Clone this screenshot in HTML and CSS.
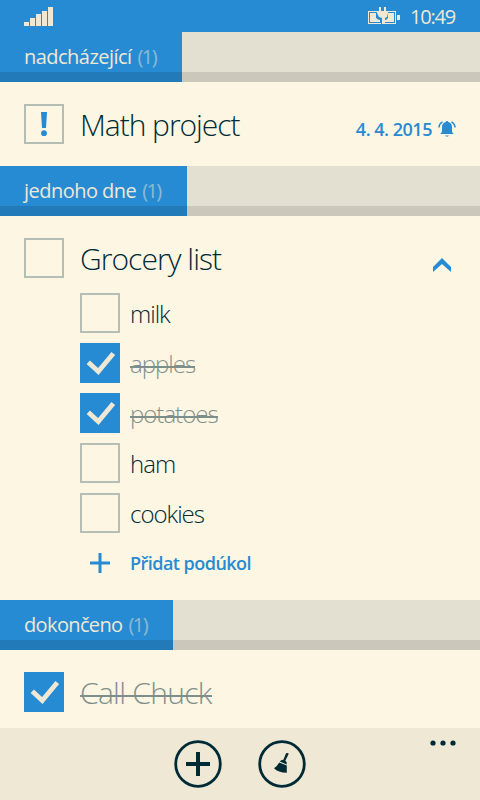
FILE: index.html
```html
<!DOCTYPE html>
<html lang="cs">
<head>
<meta charset="utf-8">
<title>Úkoly</title>
<link rel="stylesheet" href="styles.css">
</head>
<body>
<svg class="defs" width="0" height="0">
  <symbol id="check" viewBox="0 0 40 40"><path d="M8.300 19.200 18.300 28.500 33.300 10.500" fill="none" stroke="#eee8d5" stroke-width="4.800"/></symbol>
</svg>
<div class="phone">
  <header class="status">
    <svg width="30" height="20" viewBox="0 0 30 20" fill="#eee8d5"><path d="M0 16h5v4H0zM6 12h5v8H6zM12 8h5v12h-5zM18 5h5v15h-5zM24 1h5v19h-5z"/></svg>
    <div class="status-right">
      <svg width="32" height="17" viewBox="0 0 32 17" fill="#eee8d5"><path d="M0 4h9v1H1v11h12v1H0zM19 4h9v13H16v-1h11V5h-8z"/><path d="M2 6h6v5l3 2h1v2H2zM20 6h6v9h-9v-2h1l2-2z"/><path d="M11 0h2v4h3V0h2v4h2v2l-1 4-2 1v6h-3v-6l-3-1-2-4V4h2z"/><path d="M29 8h3v5h-3z"/></svg>
      <span class="clock">10:49</span>
    </div>
  </header>
  <main>
    <div class="section s1"><h2><span class="name">nadcházející</span><span class="count">(1)</span></h2></div>
    <div class="task t1">
      <span class="box important"><svg width="36" height="36" viewBox="0 0 36 36" fill="#268bd2"><path d="M15 6h6l-1 16h-4z"/><circle cx="18" cy="27.200" r="2.900"/></svg></span>
      <span class="title math">Math project</span>
      <span class="date">4. 4. 2015</span>
      <svg class="bell" width="18" height="18" viewBox="0 0 18 18"><path d="M9 1c.8 0 1.200.5 1.300 1.100C13 2.700 14 5 14 7v4c0 1.500 1 2.400 2 3H2c1-.6 2-1.500 2-3V7c0-2 1-4.300 3.700-4.900C7.800 1.500 8.200 1 9 1zM7.200 15.500h3.600C10.500 17 7.500 17 7.200 15.500z" fill="#268bd2"/><path d="M4.500 2Q1.200 3.500 1 7.500M13.500 2Q16.800 3.500 17 7.500" fill="none" stroke="#268bd2" stroke-width="1.500"/></svg>
    </div>
    <div class="section s2"><h2><span class="name">jednoho dne</span><span class="count">(1)</span></h2></div>
    <div class="task t2">
      <span class="box"></span>
      <span class="title grocery">Grocery list</span>
      <svg class="chevron" width="18" height="14" viewBox="0 0 18 14"><path d="M0 9 9 0l9 9v5L9 6 0 14z" fill="#268bd2"/></svg>
    </div>
    <ul class="subtasks">
      <li><span class="box"></span><span class="item milk">milk</span></li>
      <li><span class="box on"><svg width="40" height="40"><use href="#check"/></svg></span><span class="item done apples">apples</span></li>
      <li><span class="box on"><svg width="40" height="40"><use href="#check"/></svg></span><span class="item done potatoes">potatoes</span></li>
      <li><span class="box"></span><span class="item ham">ham</span></li>
      <li><span class="box"></span><span class="item cookies">cookies</span></li>
      <li class="add"><svg width="40" height="40" viewBox="0 0 40 40"><path d="M10 20h20M20 10v20" stroke="#268bd2" stroke-width="3" fill="none"/></svg><span class="add-label">Přidat podúkol</span></li>
    </ul>
    <div class="section s3"><h2><span class="name">dokončeno</span><span class="count">(1)</span></h2></div>
    <div class="task t3">
      <span class="box on"><svg width="40" height="40"><use href="#check"/></svg></span>
      <span class="title done chuck">Call Chuck</span>
    </div>
  </main>
  <footer class="appbar">
    <svg width="48" height="48" viewBox="0 0 48 48" fill="none" stroke="#002b36"><circle cx="24" cy="24" r="22.300" stroke-width="2.800"/><path d="M12 24h24M24 12v24" stroke-width="4"/></svg>
    <svg width="48" height="48" viewBox="0 0 48 48"><circle cx="24" cy="24" r="22.300" fill="none" stroke="#002b36" stroke-width="2.800"/><path d="M28 13.300 30.500 13 30.300 14.800 27.400 20.500 28.800 22.800 28.600 24.500 21.800 21.400Q23.500 19.500 25.400 19.800zM21.200 22.600 28.800 25.500V32.800Q20 32.500 16 28.200Q19.500 26 21.200 22.600z" fill="#002b36"/></svg>
    <svg class="more" width="26" height="6" viewBox="0 0 26 6" fill="#002b36"><circle cx="3" cy="3" r="2.600"/><circle cx="13" cy="3" r="2.600"/><circle cx="23" cy="3" r="2.600"/></svg>
  </footer>
</div>
</body>
</html>
```
FILE: styles.css
```css
* { box-sizing: border-box; }
body { margin: 0; background: #fdf6e3; color: #002b36; font-family: "Open Sans", "Noto Sans", sans-serif; }
svg { display: block; flex: none; }
.defs { position: absolute; }
.phone { width: 480px; height: 800px; display: flex; flex-direction: column; overflow: hidden; }
.status { height: 32px; flex: none; background: #268bd2; display: flex; justify-content: space-between; align-items: flex-start; padding: 6px 24px 0; color: #eee8d5; }
.status-right { display: flex; gap: 10px; }
.status-right svg { margin-top: 1px; }
.clock { font-size: 20px; line-height: 21px; font-weight: 400; letter-spacing: -1.2px; width: 46px; white-space: nowrap; }
main { flex: 1; }
.section { height: 50px; background: linear-gradient(#e3e0d2 40px, #cbc8bb 40px); }
h2 { margin: 0; height: 50px; padding-left: 24px; background: linear-gradient(#268bd2 40px, #227ab8 40px); color: #eee8d5; font-size: 20px; line-height: 49px; font-weight: 400; display: flex; gap: 6px; white-space: nowrap; }
.s1 h2 { width: 182px; }
.s2 h2 { width: 187px; }
.s3 h2 { width: 173px; }
.name { letter-spacing: -0.53px; }
.s3 .name { letter-spacing: -0.63px; }
.count { opacity: .5; letter-spacing: -1.6px; }
.task { display: flex; padding: 22px 24px 0; }
.t1 { height: 84px; }
.t2 { height: 77px; }
.t3 { height: 78px; }
.box { width: 40px; height: 40px; flex: none; border: 2px solid #b5beb4; }
.on { border: 0; background: #268bd2; }
.title { height: 44px; margin-left: 16px; font-size: 30px; line-height: 42px; font-weight: 300; white-space: nowrap; }
.math { letter-spacing: -1.05px; }
.grocery { letter-spacing: -0.95px; }
.chuck { letter-spacing: -0.7px; }
.done { opacity: .5; background: linear-gradient(#002b36, #002b36) 0 23px / 100% 2px no-repeat; }
.date { margin-left: auto; font-size: 18px; font-weight: 600; line-height: 50px; letter-spacing: -0.48px; color: #268bd2; white-space: nowrap; }
.bell { margin: 16px 0 0 6px; }
.chevron { margin: 20px 5px 0 auto; }
.subtasks { list-style: none; margin: 0; padding: 0 0 0 80px; height: 307px; }
.subtasks li { display: flex; height: 50px; }
.item { height: 44px; margin-left: 10px; font-size: 24px; line-height: 42px; font-weight: 300; letter-spacing: -1px; }
.add-label { margin-left: 10px; font-size: 18px; line-height: 41px; font-weight: 600; color: #268bd2; letter-spacing: -0.53px; }
.appbar { height: 72px; flex: none; background: #eee8d5; display: flex; justify-content: center; gap: 36px; padding-top: 12px; position: relative; }
.more { position: absolute; right: 24px; top: 12px; }
```
